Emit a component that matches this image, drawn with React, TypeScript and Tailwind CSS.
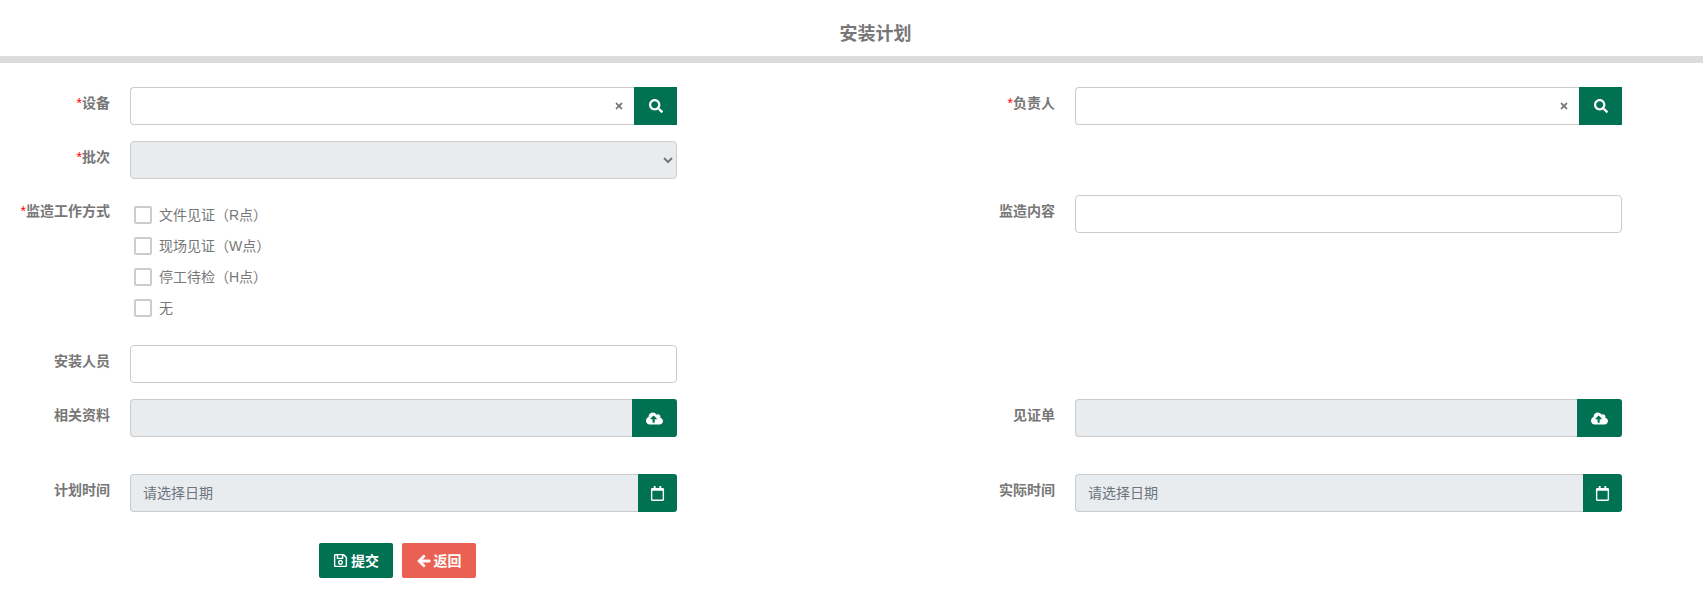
import React from 'react';
import { FaArrowLeft, FaCloudUploadAlt, FaRegCalendar, FaRegSave, FaSearch, FaTimes } from 'react-icons/fa';

const fieldClass = 'h-[38px] w-full border border-[#ccc] px-3 text-sm text-[#777] outline-none';

const Label: React.FC<{ text: string; required?: boolean }> = ({ text, required }) => (
  <label className="pr-5 pt-[6px] text-right text-sm leading-5 font-bold text-[#777]">
    {required && <span className="font-normal text-[#f00]">*</span>}
    {text}
  </label>
);

const SearchField: React.FC = () => (
  <div className="flex">
    <div className="relative flex-1">
      <input className={`${fieldClass} rounded-l border-r-0`} />
      <FaTimes className="absolute top-[14px] right-[10px] h-[10px] w-[10px] text-[#777]" />
    </div>
    <button className="flex h-[38px] w-[43px] items-center justify-center bg-[#007152] text-white">
      <FaSearch className="h-[14px] w-[14px]" />
    </button>
  </div>
);

const AddonField: React.FC<{ placeholder?: string; addonWidth: string; children: React.ReactNode }> = ({
  placeholder,
  addonWidth,
  children,
}) => (
  <div className="flex">
    <input
      readOnly
      placeholder={placeholder}
      className={`${fieldClass} flex-1 rounded-l border-r-0 bg-[#e9ecef] placeholder:text-[#6c757d]`}
    />
    <button className={`flex h-[38px] items-center justify-center rounded-r-[3px] bg-[#007152] text-white ${addonWidth}`}>
      {children}
    </button>
  </div>
);

const checks = ['文件见证（R点）', '现场见证（W点）', '停工待检（H点）', '无'];

export default function App() {
  return (
    <div className="h-[603px] bg-white font-['Liberation_Sans','Noto_Sans_CJK_SC',sans-serif]">
      <h1 className="flex h-14 items-center justify-center pt-3 pl-12 text-lg font-bold text-[#777]">安装计划</h1>
      <div className="h-[7px] bg-[#dcdcdc]" />

      <form className="grid grid-cols-[130px_547px_398px_547px] gap-y-4 pt-6">
        <Label text="设备" required />
        <SearchField />
        <Label text="负责人" required />
        <SearchField />

        <Label text="批次" required />
        <select className={`${fieldClass} rounded bg-[#e9ecef] text-[#222]`} />
        <div className="col-span-2" />

        <Label text="监造工作方式" required />
        <div className="flex h-[134px] flex-col gap-[13px] pt-[11px] pl-1">
          {checks.map((c) => (
            <label key={c} className="flex h-[18px] items-center gap-[7px] text-sm text-[#777]">
              <input type="checkbox" className="h-[18px] w-[18px] appearance-none rounded-[2px] border-2 border-[#ccc] bg-white" />
              {c}
            </label>
          ))}
        </div>
        <Label text="监造内容" />
        <div>
          <input className={`${fieldClass} rounded`} />
        </div>

        <Label text="安装人员" />
        <input className={`${fieldClass} rounded`} />
        <div className="col-span-2" />

        <Label text="相关资料" />
        <AddonField addonWidth="w-[45px]">
          <FaCloudUploadAlt className="h-[17px] w-[17px]" />
        </AddonField>
        <Label text="见证单" />
        <AddonField addonWidth="w-[45px]">
          <FaCloudUploadAlt className="h-[17px] w-[17px]" />
        </AddonField>

        <div className="col-span-4 mt-[21px] grid grid-cols-subgrid">
          <Label text="计划时间" />
          <AddonField placeholder="请选择日期" addonWidth="w-[39px]">
            <FaRegCalendar className="h-[15px] w-[15px]" />
          </AddonField>
          <Label text="实际时间" />
          <AddonField placeholder="请选择日期" addonWidth="w-[39px]">
            <FaRegCalendar className="h-[15px] w-[15px]" />
          </AddonField>
        </div>

        <div className="col-span-4 mt-[15px] flex gap-[9px] pl-[319px]">
          <button className="flex h-[35px] w-[74px] items-center justify-center gap-[3px] rounded-[2px] bg-[#007152] text-sm font-bold text-white">
            <FaRegSave className="h-[15px] w-[15px]" />
            提交
          </button>
          <button className="flex h-[35px] w-[74px] items-center justify-center gap-[3px] rounded-[2px] bg-[#ea6153] text-sm font-bold text-white">
            <FaArrowLeft className="h-[14px] w-[14px] stroke-[30]" />
            返回
          </button>
        </div>
      </form>
    </div>
  );
}
